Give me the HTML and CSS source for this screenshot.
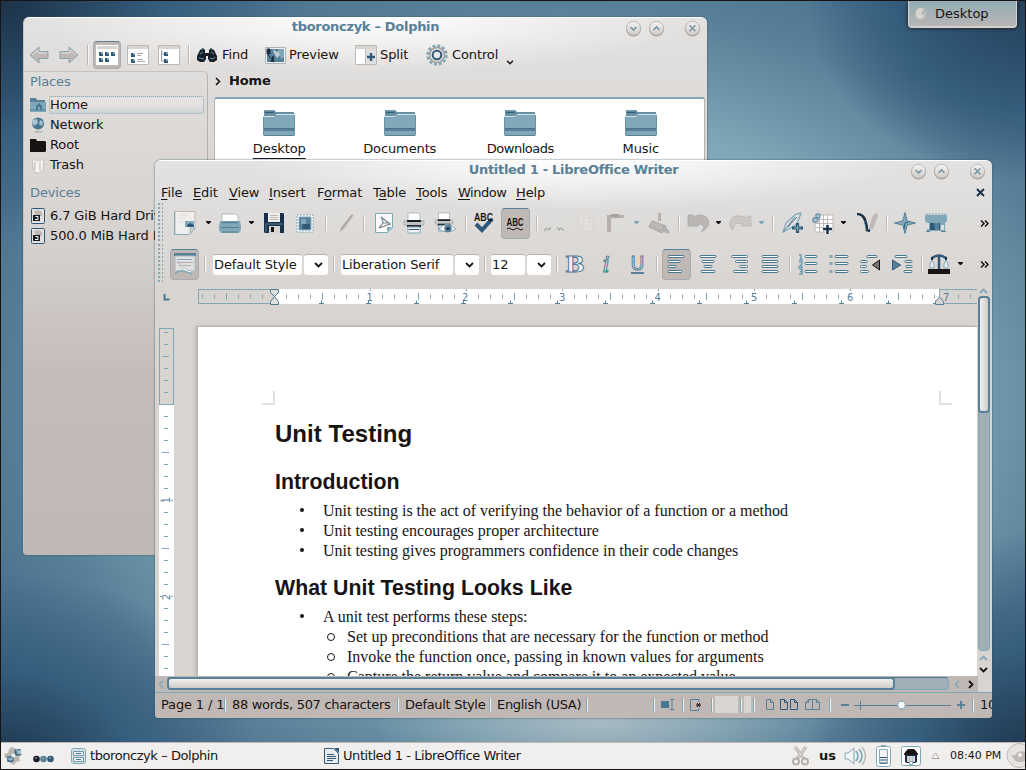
FILE: index.html
```html
<!DOCTYPE html>
<html lang="en">
<head>
<meta charset="utf-8">
<title>Desktop</title>
<link rel="stylesheet" href="styles.css">
</head>
<body>
<svg class="defs" width="0" height="0">
  <defs>
    <linearGradient id="gBtn" x1="0" y1="0" x2="0" y2="1"><stop offset="0" stop-color="#f4f3f2"/><stop offset="1" stop-color="#d0ccc8"/></linearGradient>
    <symbol id="wmin" viewBox="0 0 17 17"><circle cx="8.5" cy="9" r="7.5" fill="#a9a5a2"/><circle cx="8.5" cy="8.2" r="7" fill="url(#gBtn)" stroke="#b4afab" stroke-width=".8"/><path d="M5.5 7l3 3 3-3" fill="none" stroke="#7796a4" stroke-width="1.6"/></symbol>
    <symbol id="wmax" viewBox="0 0 17 17"><circle cx="8.5" cy="9" r="7.5" fill="#a9a5a2"/><circle cx="8.5" cy="8.2" r="7" fill="url(#gBtn)" stroke="#b4afab" stroke-width=".8"/><path d="M5.5 10l3-3 3 3" fill="none" stroke="#7796a4" stroke-width="1.6"/></symbol>
    <symbol id="wclose" viewBox="0 0 17 17"><circle cx="8.5" cy="9" r="7.5" fill="#a9a5a2"/><circle cx="8.5" cy="8.2" r="7" fill="url(#gBtn)" stroke="#b4afab" stroke-width=".8"/><path d="M5.5 5.2l6 6m0-6l-6 6" fill="none" stroke="#7796a4" stroke-width="1.5"/></symbol>
    <symbol id="folder" viewBox="0 0 32 28"><path d="M1 1h10l2 2h18v5H1z" fill="#6690a4"/><path d="M2 2h8l1 2H2zM12 5h19v2H12z" fill="#305878"/><path d="M2 2h8" stroke="#93b5c3"/><path d="M0 8h11l2-2h19v20l-1 1H1l-1-1z" fill="#80a8b8"/><path d="M0 7.500h11l2-2h19" fill="none" stroke="#d8e3e7"/><path d="M0 19.500h32" stroke="#4a758f"/><path d="M0 20h32v2H0z" fill="#588098"/><path d="M1 26.500h30" stroke="#588098"/><path d="M.5 8v18M31.500 7v19" stroke="#6891a5"/></symbol>
    <symbol id="down" viewBox="0 0 5 4"><path d="M0 0h5v1L3 3H2L0 1z" fill="currentColor"/></symbol>
    <symbol id="chev" viewBox="0 0 9 6"><path d="M1 1l3.500 3.500L8 1" fill="none" stroke="currentColor" stroke-width="1.800"/></symbol>
    <symbol id="more" viewBox="0 0 9 7"><path d="M1 .5l3 3-3 3M5 .5l3 3-3 3" fill="none" stroke="#181414" stroke-width="1.500"/></symbol>
    <symbol id="drive" viewBox="0 0 14 16"><rect x=".5" y=".5" width="13" height="15" rx="1" fill="#e0e0e0" stroke="#305878"/><path d="M3 3l4-1 4 2v4H5z" fill="#c0b8b4"/><rect x="2" y="7" width="7" height="6" fill="#181c24"/><path d="M4.500 8.500H7v3H4" fill="none" stroke="#fff"/></symbol>
    <symbol id="printer" viewBox="0 0 22 22"><path d="M5 1h12v8H5z" fill="#fff" stroke="#b4b8ba"/><path d="M4 8h14v2H4z" fill="#181c24"/><path d="M1 9h3v2h14V9h3v4H1z" fill="#d8d4d0" stroke="#8a9ca5" stroke-width=".7"/><path d="M4 13h14v2H4z" fill="#28303c"/><path d="M5 15h12v6H5z" fill="#f4f4f4" stroke="#80a8b8"/><path d="M6 17.500h10" stroke="#305878"/></symbol>
  </defs>
</svg>

<div class="desktop">
  <div class="toolbox">
    <svg width="16" height="16" viewBox="0 0 16 16"><circle cx="8" cy="8" r="6.500" fill="#c0b8b4" opacity=".7"/><path d="M3 7a5 5 0 0 1 8-4l-2 2 3 3-2 4-4 1-3-3z" fill="#d8d4d0"/><path d="M8 6l3 1-1 2z" fill="#80a8b8"/></svg>
    <span>Desktop</span>
  </div>

  <section class="window dolphin">
    <header class="titlebar"><h1>tboronczyk – Dolphin</h1>
      <div class="controls"><svg><use href="#wmin"/></svg><svg><use href="#wmax"/></svg><svg class="last"><use href="#wclose"/></svg></div>
    </header>
    <div class="d-tools">
      <svg width="20" height="18" viewBox="0 0 20 18"><path d="M1 9l9-8v4.500h9v7h-9V17z" fill="#c0b8b4" stroke="#86a3b0"/><path d="M3 9l6-5v3h9" fill="none" stroke="#e0e0e0"/></svg>
      <svg width="20" height="18" viewBox="0 0 20 18"><path d="M19 9l-9-8v4.500H1v7h9V17z" fill="#c0b8b4" stroke="#86a3b0"/><path d="M2 7h9V4l6 5" fill="none" stroke="#e0e0e0"/></svg>
      <i class="sep"></i>
      <span class="pressed"><svg width="22" height="20" viewBox="0 0 22 20"><path d="M0 0h22v20H0z" fill="#fff"/><path d="M1 1h20v3H1z" fill="#d8d4d0"/><g fill="#305878"><path d="M3 7h4v4H3zM9 7h4v4H9zM15 7h4v4h-4zM3 13h4v4H3zM9 13h4v4H9z"/></g><g fill="#80a8b8"><path d="M5 7h2v2H5zM11 7h2v2h-2zM17 7h2v2h-2zM5 13h2v2H5zM11 13h2v2h-2z"/></g></svg></span>
      <svg width="22" height="20" viewBox="0 0 22 20"><path d="M.5.5h21v19H.5z" fill="#fff" stroke="#c0b8b4"/><path d="M1 1h20v3H1z" fill="#d8d4d0"/><path d="M4 8h4v4H4zM4 14h4v4H4z" fill="#305878"/><path d="M6 8h2v2H6zM6 14h2v2H6z" fill="#80a8b8"/><path d="M10 8.500h6M10 10.500h4M10 14.500h6M10 16.500h8" stroke="#aaa8a6"/></svg>
      <svg width="22" height="20" viewBox="0 0 22 20"><path d="M.5.500h21v19H.5z" fill="#fff" stroke="#c0b8b4"/><path d="M1 1h20v3H1z" fill="#d8d4d0"/><path d="M3.500 5v11H6M3.500 9H6" fill="none" stroke="#8a9ca5"/><path d="M6 7h4v4H6zM6 14h4v4H6z" fill="#305878"/><path d="M8 7h2v2H8zM8 14h2v2H8z" fill="#80a8b8"/></svg>
      <i class="sep"></i>
      <svg width="22" height="16" viewBox="0 0 22 16"><path d="M4 3l3-2 2 2v3h4V3l2-2 3 2 3 6v4l-3 2h-4l-2-3V9h-2v3l-2 3H4l-3-2V9z" fill="#181c24"/><path d="M3 10a3 2.500 0 0 0 5 1M14 11a3 2.500 0 0 0 5-1M4 7l3-2M15 5l3 2M5 3l2-1M15 2l2 1" stroke="#487890" stroke-width="1.300" fill="none"/></svg><b>Find</b>
      <svg width="21" height="17" viewBox="0 0 21 17"><path d="M.5.500h20v16H.5z" fill="#f0f0f0" stroke="#aab4b8"/><path d="M2 2h17v13H2z" fill="#588098"/><path d="M8 2l4 3 2-1 2 3-4 4-3-5z" fill="#c0ccd0"/><path d="M13 2h6v8l-3 2z" fill="#80a8b8"/><path d="M2 2h3v5H2zM6 15l2-6 1 6M3 8l4 4" stroke="#183048" fill="#183048"/></svg><b>Preview</b>
      <svg width="22" height="20" viewBox="0 0 22 20"><path d="M.5.500h21v19H.5z" fill="#fff" stroke="#c0b8b4"/><path d="M1 1h20v3H1z" fill="#d8d4d0"/><path d="M10 4h11v15H10z" fill="#e0e0e0"/><path d="M10.500 4v15" stroke="#c0b8b4"/><path d="M12 12h8M16 8v8" stroke="#305878" stroke-width="2.400"/></svg><b>Split</b>
      <svg width="22" height="22" viewBox="0 0 22 22"><circle cx="11" cy="11" r="9.300" fill="none" stroke="#80a8b8" stroke-width="2.800" stroke-dasharray="3 1.870"/><circle cx="11" cy="11" r="7.500" fill="#e0e0e0" stroke="#a09e9c" stroke-width="1.500"/><circle cx="11" cy="11" r="4.300" fill="#e8eaea" stroke="#305878" stroke-width="2"/></svg><b>Control</b>
      <svg class="ctl" width="8" height="5"><use href="#chev"/></svg>
    </div>
    <div class="d-body">
      <aside class="places">
        <h2>Places</h2>
        <ul>
          <li class="sel"><svg viewBox="0 0 16 16"><path d="M0 1h6l1 2h8v12H0z" fill="#588098"/><path d="M0 5h16v10H0z" fill="#80a8b8"/><path d="M0 13h16" stroke="#588098"/><path d="M6 13V9l3-3 3 3v4H10v-3H8v3z" fill="#487890"/></svg><span>Home</span></li>
          <li><svg viewBox="0 0 16 16"><circle cx="8" cy="6.500" r="6" fill="#487890"/><path d="M3 3l4-1 1 4-4 3-2-3zM10 3l3 2-1 4-3-2z" fill="#a9c4cf"/><path d="M4 15h9M8 13v2" stroke="#b4b8ba" stroke-width="1.500"/></svg><span>Network</span></li>
          <li><svg viewBox="0 0 16 16"><path d="M0 2h6l1 2h8l1 1v9l-1 1H0z" fill="#181414"/></svg><span>Root</span></li>
          <li><svg viewBox="0 0 16 16"><path d="M2 2h12l-1 12-4 2-5-1z" fill="#f4f4f4" stroke="#b4afab" stroke-width=".7"/><ellipse cx="8" cy="2.500" rx="6" ry="1.700" fill="#d8d4d0"/><path d="M10 5v9M5 5v8" stroke="#c0b8b4"/></svg><span>Trash</span></li>
        </ul>
        <h2>Devices</h2>
        <ul>
          <li><svg viewBox="0 0 14 16"><use href="#drive"/></svg><span>6.7 GiB Hard Drive</span></li>
          <li><svg viewBox="0 0 14 16"><use href="#drive"/></svg><span>500.0 MiB Hard Drive</span></li>
        </ul>
      </aside>
      <div class="view">
        <nav class="crumb"><svg width="6" height="9" viewBox="0 0 6 9"><path d="M1 1l3.500 3.500L1 8" fill="none" stroke="#181414" stroke-width="1.600"/></svg><strong>Home</strong></nav>
        <div class="files">
          <figure><svg><use href="#folder"/></svg><figcaption class="under">Desktop</figcaption></figure>
          <figure><svg><use href="#folder"/></svg><figcaption>Documents</figcaption></figure>
          <figure><svg><use href="#folder"/></svg><figcaption class="tight">Downloads</figcaption></figure>
          <figure><svg><use href="#folder"/></svg><figcaption>Music</figcaption></figure>
        </div>
      </div>
    </div>
  </section>

  <section class="window writer">
    <header class="titlebar"><h1>Untitled 1 - LibreOffice Writer</h1>
      <div class="controls"><svg><use href="#wmin"/></svg><svg><use href="#wmax"/></svg><svg class="last"><use href="#wclose"/></svg></div>
    </header>
    <nav class="menu">
      <span><u>F</u>ile</span><span><u>E</u>dit</span><span><u>V</u>iew</span><span><u>I</u>nsert</span><span>F<u>o</u>rmat</span><span>T<u>a</u>ble</span><span><u>T</u>ools</span><span class="tight"><u>W</u>indow</span><span><u>H</u>elp</span>
      <svg width="9" height="9" viewBox="0 0 9 9"><path d="M1 1l7 7M8 1L1 8" stroke="#183048" stroke-width="1.900"/></svg>
    </nav>

    <div class="bar bar1">
      <i class="grip"></i>
      <svg width="22" height="24" viewBox="0 0 22 24"><path d="M1 .5h20v17l-5 6H1z" fill="#f0efee" stroke="#c0b8b4"/><path d="M.5 1v22.500H15" fill="none" stroke="#80a8b8"/><path d="M21 17h-5v6z" fill="#c8d4d8" stroke="#aab4b8"/><path d="M11 10h9v6h-9z" fill="#80a8b8"/><path d="M13 14l3-2 4 2v2h-7z" fill="#305878"/><path d="M4 4h10M4 7h8M4 11h4" stroke="#e0ddda"/></svg>
      <svg class="arr"><use href="#down"/></svg>
      <svg width="22" height="20" viewBox="0 0 22 20"><path d="M3 9V1h14l2 2v6z" fill="#fff" stroke="#b4b8ba"/><path d="M1 8h20l1 5H0z" fill="#80a8b8"/><path d="M3 9.500h16" stroke="#588098" stroke-width="1.500"/><path d="M0 13h22v4l-2 3H2l-2-3z" fill="#80a8b8"/><path d="M2 14.500h18M3 19h16" stroke="#588098"/></svg>
      <svg class="arr"><use href="#down"/></svg>
      <svg width="20" height="20" viewBox="0 0 20 20"><path d="M0 0h19l1 1v19H1l-1-1z" fill="#183048"/><path d="M4 0h12v9H4z" fill="#f0efee"/><path d="M6 2.500h8M6 4.500h8M6 6.500h8" stroke="#c0b8b4"/><path d="M1 11h18M2 12v7" stroke="#588098"/><path d="M5 13h11v7H5z" fill="#d8d4d0"/><path d="M7 14h3v5H7z" fill="#181414"/></svg>
      <svg width="18" height="19" viewBox="0 0 18 19"><path d="M1 1h16v17H1z" fill="#fff" stroke="#80a8b8" stroke-dasharray="2 1"/><path d="M3 3h12v13H3z" fill="#588098" stroke="#80a8b8"/><path d="M5 5h5v5H5z" fill="#80a8b8"/><path d="M7 10h7v5H6z" fill="#305878"/></svg>
      <i class="sep"></i>
      <svg width="18" height="20" viewBox="0 0 18 20"><path d="M15 1l2 1L7 16l-4 3 1-5z" fill="#c0b8b4"/><path d="M15 2L4 17" stroke="#a09a97"/></svg>
      <i class="sep"></i>
      <svg width="18" height="20" viewBox="0 0 18 20"><path d="M.5.500h17v14l-5 5H.5z" fill="#fbfbfb" stroke="#80a8b8"/><path d="M17 14h-5v5z" fill="#80a8b8"/><path d="M6 4q2 3 2 6l7 0M8 10l-4 5M6 4l9 7-11 4" fill="none" stroke="#77828a" stroke-width="1.200"/></svg>
      <svg width="22" height="22"><use href="#printer"/></svg>
      <svg width="23" height="22" viewBox="0 0 23 22"><use href="#printer" width="20" height="20"/><path d="M5 17q8-9 17 0-9 6-17 0z" fill="#fff" stroke="#80a8b8"/><circle cx="14" cy="16.500" r="3.800" fill="#588098"/><circle cx="14" cy="16.500" r="1.600" fill="#183048"/></svg>
      <i class="sep"></i>
      <svg class="abc" width="22" height="22" viewBox="0 0 22 22"><path d="M3 12l6 6 10-11" fill="none" stroke="#305878" stroke-width="4"/><text x="1" y="9" textLength="19" lengthAdjust="spacingAndGlyphs">ABC</text></svg>
      <span class="pressed"><svg class="abc" width="22" height="22" viewBox="0 0 22 22"><text x="2.500" y="14" textLength="17" lengthAdjust="spacingAndGlyphs">ABC</text><path d="M3 17q2-2 4 0t4 0 4 0 4 0" fill="none" stroke="#181414"/></svg></span>
      <i class="sep"></i>
      <svg width="20" height="20" viewBox="0 0 20 20"><path d="M6 9l5 6M14 9l-5 6" stroke="#e0e0e0"/><path d="M1 18a2 2 0 0 1 4-1l2-3M19 18a2 2 0 0 0-4-1l-2-3" fill="none" stroke="#a9aaaa" stroke-width="1.300"/></svg>
      <svg width="18" height="20" viewBox="0 0 18 20"><path d="M2 1h11v13H2zM6 5h10v13H6z" fill="#e2e1e0" stroke="#d2cecb" stroke-dasharray="2 1"/></svg>
      <svg width="18" height="20" viewBox="0 0 18 20"><path d="M0 2h17v3H4v14H0z" fill="#b8b0ac"/><path d="M4 1h8v3H4z" fill="#a9a29e"/><path d="M5 6h12v12H5z" fill="#dfdddb"/></svg>
      <svg class="arr pale"><use href="#down"/></svg>
      <svg width="23" height="23" viewBox="0 0 23 23"><path d="M10 1h3v8h-3z" fill="#b8b0ac"/><path d="M4 9l14 5-4 7-13-6z" fill="#c0b8b4" stroke="#aca5a1"/><path d="M15 13l7 7-2 2-6-3z" fill="#b8b0ac"/><path d="M2 13l12 6 2-6 5 7" fill="none" stroke="#80a8b8" stroke-dasharray="1 1"/></svg>
      <i class="sep"></i>
      <svg width="23" height="18" viewBox="0 0 23 18"><path d="M1 1h5l-1 2Q19-3 22 8q0 6-8 10 3-3 3-5-2-3-5-3l-1 2H1z" fill="#bdb5b1" stroke="#9eabb0" stroke-width=".8"/></svg>
      <svg class="arr"><use href="#down"/></svg>
      <svg width="23" height="18" viewBox="0 0 23 18"><path d="M22 12H12l1-2q-6-2-8 2l-1 4Q0 13 1 8 5-2 18 4l1-2h3z" fill="#ccc7c3" stroke="#b4afab" stroke-dasharray="2 1"/></svg>
      <svg class="arr pale"><use href="#down"/></svg>
      <i class="sep"></i>
      <svg width="22" height="22" viewBox="0 0 22 22"><path d="M1 20L4 11 14 2l5-1-4 11-8 5z" fill="#e0e0e0" stroke="#80a8b8" stroke-width="1.300"/><path d="M2 19L13 5M6 15l9-10" stroke="#588098"/><path d="M10 16h11M15.500 11v10" stroke="#305878" stroke-width="3.200"/><path d="M12 16h7M15.500 13v6" stroke="#80a8b8"/></svg>
      <svg width="21" height="21" viewBox="0 0 21 21"><path d="M3 2h18v17H3z" fill="#fff"/><path d="M3 6.500h18M3 10.500h18M3 14.500h18M7.500 2v17M11.500 2v17M15.500 2v17M3 2h18v17H3z" fill="none" stroke="#c0b8b4"/><path d="M4 1h4v4H4zM1 5h5v4H1z" fill="#a9c4cf" stroke="#588098"/><path d="M11 16h9M15.500 12v9" stroke="#fff" stroke-width="4"/><path d="M11 16h9M15.500 12v9" stroke="#183048" stroke-width="2.500"/></svg>
      <svg class="arr"><use href="#down"/></svg>
      <svg width="24" height="22" viewBox="0 0 24 22"><path d="M14 17l3-12q3-4 5-4l1 3-5 13z" fill="#c0b8b4"/><path d="M2 2q6 0 8 6t2 10l3 1" fill="none" stroke="#183048" stroke-width="2.600"/><path d="M10 9q0 8 3 10" fill="none" stroke="#80a8b8" stroke-dasharray="1 1.500"/></svg>
      <i class="sep"></i>
      <svg width="22" height="22" viewBox="0 0 22 22"><path d="M11 .5l2.200 8.300 8.300 2.200-8.300 2.200L11 21.500l-2.200-8.300L.5 11l8.300-2.200z" fill="#80a8b8" stroke="#588098"/><path d="M11 11l3-1M11 11l-1 6" stroke="#305878"/></svg>
      <svg width="22" height="20" viewBox="0 0 22 20"><path d="M0 2h22v6l-2 2v8H2v-8L0 8z" fill="#80a8b8"/><path d="M1 1h20" stroke="#80a8b8" stroke-dasharray="2 1"/><path d="M5 10h10v7H5z" fill="#305878"/><path d="M9 10h5v7h-4z" fill="#588098"/><path d="M2 10h2v6H2zM16 12h3v5h-3z" fill="#d8e0e3"/><path d="M1 18.500h4M16 18.500h5" stroke="#588098"/></svg>
      <i></i>
      <svg width="9" height="7"><use href="#more"/></svg>
    </div>

    <div class="bar bar2">
      <i class="grip"></i>
      <span class="pressed"><svg width="22" height="22" viewBox="0 0 22 22"><path d="M0 0h22v3H0z" fill="#588098"/><path d="M1 3h20v15H1z" fill="#e0e0e0" stroke="#a9b9c0"/><path d="M3 6.500h15" stroke="#80a8b8"/><path d="M3 9.500h16M5 12.500h12" stroke="#b4afab"/><path d="M3 8l10 9 5 1-3 3-4-3z" fill="#fff" stroke="#aab4b8" stroke-width=".8"/><path d="M1 21q4-6 17 0" stroke="#80a8b8" stroke-width="1.500" fill="none"/></svg></span>
      <i class="sep"></i>
      <span class="combo"><em>Default Style</em><i><svg width="9" height="6"><use href="#chev"/></svg></i></span>
      <i class="sep"></i>
      <span class="combo"><em>Liberation Serif</em><i><svg width="9" height="6"><use href="#chev"/></svg></i></span>
      <i class="sep"></i>
      <span class="combo"><em>12</em><i><svg width="9" height="6"><use href="#chev"/></svg></i></span>
      <i class="sep"></i>
      <span class="fmt bold">B</span>
      <span class="fmt ital">i</span>
      <span class="fmt undl">U</span>
      <i class="sep"></i>
      <span class="pressed"><svg class="lines" viewBox="0 0 20 20"><rect x="1" y="1.500" width="16" height="2" rx="1"/><rect x="1" y="6.500" width="12" height="2" rx="1"/><rect x="1" y="11.500" width="8" height="2" rx="1"/><rect x="1" y="16.500" width="14" height="2" rx="1"/></svg></span>
      <svg class="lines" viewBox="0 0 20 20"><rect x="2" y="1.500" width="16" height="2" rx="1"/><rect x="4" y="6.500" width="12" height="2" rx="1"/><rect x="6" y="11.500" width="8" height="2" rx="1"/><rect x="3" y="16.500" width="14" height="2" rx="1"/></svg>
      <svg class="lines" viewBox="0 0 20 20"><rect x="2.500" y="1.500" width="16" height="2" rx="1"/><rect x="6.500" y="6.500" width="12" height="2" rx="1"/><rect x="10.500" y="11.500" width="8" height="2" rx="1"/><rect x="4.500" y="16.500" width="14" height="2" rx="1"/></svg>
      <svg class="lines" viewBox="0 0 20 20"><rect x="2" y="1.500" width="16" height="2" rx="1"/><rect x="2" y="6.500" width="16" height="2" rx="1"/><rect x="2" y="11.500" width="16" height="2" rx="1"/><rect x="2" y="16.500" width="16" height="2" rx="1"/></svg>
      <i class="sep"></i>
      <svg class="lines" viewBox="0 0 20 20"><g class="nums"><path d="M1 1h2v5M1 6h4M1 8h3v2L1 13h4M1 15h3v5H1M2 17.500h2"/></g><rect x="7" y="1.500" width="12" height="2" rx="1"/><rect x="7" y="8.500" width="12" height="2" rx="1"/><rect x="7" y="16.500" width="12" height="2" rx="1"/></svg>
      <svg class="lines" viewBox="0 0 20 20"><g class="dots"><rect x="1" y="1.500" width="2" height="2"/><rect x="1" y="8.500" width="2" height="2"/><rect x="1" y="16.500" width="2" height="2"/></g><rect x="6" y="1.500" width="13" height="2" rx="1"/><rect x="6" y="8.500" width="13" height="2" rx="1"/><rect x="6" y="16.500" width="13" height="2" rx="1"/></svg>
      <svg class="lines" viewBox="0 0 20 20"><rect x="7" y="1.500" width="10" height="2" rx="1"/><rect x=".5" y="6.500" width="7" height="2" rx="1"/><rect x=".5" y="11.500" width="6" height="2" rx="1"/><rect x=".5" y="16.500" width="8" height="2" rx="1"/><path d="M19.500 6v10l-7-5z" fill="#77706e" stroke="#181414"/></svg>
      <svg class="lines" viewBox="0 0 20 20"><rect x="3" y="1.500" width="12" height="2" rx="1"/><rect x="13" y="6.500" width="7" height="2" rx="1"/><rect x="14" y="11.500" width="6" height="2" rx="1"/><rect x="12" y="16.500" width="8" height="2" rx="1"/><path d="M.5 6v10l8-5z" fill="#588098" stroke="#305878"/></svg>
      <i class="sep"></i>
      <svg width="22" height="20" viewBox="0 0 22 20"><path d="M0 15h22v5H0z" fill="#181414"/><path d="M4 4q7-5 14 0" fill="none" stroke="#305878" stroke-width="2.500"/><path d="M11 2v13" stroke="#305878" stroke-width="2.500"/><path d="M4 3v3M18 3v3" stroke="#183048" stroke-width="2"/><path d="M4 6l-2 4v4h4v-4zM18 6l-2 4v4h4v-4z" fill="#e8ecee" stroke="#80a8b8"/></svg>
      <svg class="arr"><use href="#down"/></svg>
      <i></i>
      <svg width="9" height="7"><use href="#more"/></svg>
    </div>

    <div class="work">
      <div class="workmain">
        <svg class="hruler" width="822" height="38" viewBox="155 289 822 38">
          <path d="M164.500 294v5.500h5" fill="none" stroke="#487890" stroke-width="2"/>
          <rect x="198.500" y="289.500" width="780" height="14" fill="none" stroke="#80a8b8"/>
          <rect x="274" y="289" width="665" height="15" fill="#fff"/>
          <path d="M202 296.500h774" stroke="#80a8b8" stroke-width="4" stroke-dasharray="1 11"/>
          <path d="M226.500 293v7M322.500 293v7M418.500 293v7M514.500 293v7M610.500 293v7M706.500 293v7M802.500 293v7M898.500 293v7" stroke="#80a8b8"/>
          <path d="M365 292h9v10h-9zM461 292h9v10h-9zM557 292h9v10h-9zM653 292h9v10h-9zM749 292h9v10h-9zM845 292h9v10h-9z" fill="#fff"/>
          <path d="M941 292h10v10h-10zM268 292h12v10h-12z" fill="#d8d4d0"/>
          <path d="M274 289h6v15h-6z" fill="#fff"/>
          <g class="rnum" text-anchor="middle"><text x="369.500" y="300.500">1</text><text x="465" y="300.500">2</text><text x="562" y="300.500">3</text><text x="657.500" y="300.500">4</text><text x="754" y="300.500">5</text><text x="850" y="300.500">6</text><text x="946" y="300.500">7</text></g>
          <path d="M370.500 289v2M466.500 289v2M562.500 289v2M658.500 289v2M754.500 289v2M850.500 289v2M946.500 289v2" stroke="#80a8b8"/>
          <path d="M319 303.500h5m-2.500 0v-3M366 303.500h5m-2.500 0v-3M414 303.500h5m-2.500 0v-3M461 303.500h5m-2.500 0v-3M508 303.500h5m-2.500 0v-3M555 303.500h5m-2.500 0v-3M603 303.500h5m-2.500 0v-3M650 303.500h5m-2.500 0v-3M697 303.500h5m-2.500 0v-3M744 303.500h5m-2.500 0v-3M792 303.500h5m-2.500 0v-3M839 303.500h5m-2.500 0v-3M886 303.500h5m-2.500 0v-3M933 303.500h5m-2.500 0v-3" stroke="#588098"/>
          <path d="M270.500 289.500h8v3l-4 4-4-4zM270.500 304.500h8v-3l-4-5-4 5z" fill="#e0e0e0" stroke="#487890"/>
          <path d="M935.500 304.500h8v-3l-4-4.500-4 4.500z" fill="#d8d4d0" stroke="#588098"/>
          <path d="M939.500 290v7" stroke="#80a8b8"/>
        </svg>
        <div class="docrow">
          <svg class="vruler" width="42" height="349" viewBox="155 327 42 349">
            <rect x="159" y="405" width="15" height="271" fill="#fff"/>
            <rect x="159.500" y="328.500" width="14" height="76" fill="none" stroke="#80a8b8"/>
            <path d="M166 332v344" stroke="#80a8b8" stroke-width="4" stroke-dasharray="1 11"/>
            <path d="M162 356.500h7M162 452.500h7M162 548.500h7M162 644.500h7" stroke="#80a8b8"/>
            <path d="M160 495h13v10h-13zM160 591h13v10h-13z" fill="#fff"/>
            <path d="M161 404.500h11" stroke="#80a8b8"/>
            <g class="rnum" text-anchor="middle"><text transform="translate(170 500) rotate(-90)">1</text><text transform="translate(170 597) rotate(-90)">2</text></g>
            <path d="M160 500.500h2M171 500.500h2M160 596.500h2M171 596.500h2" stroke="#80a8b8"/>
          </svg>
          <article class="page">
            <div class="corners"><i></i><i></i></div>
            <h2 class="t1">Unit Testing</h2>
            <h2 class="t2">Introduction</h2>
            <ul>
              <li>Unit testing is the act of verifying the behavior of a function or a method</li>
              <li>Unit testing encourages proper architecture</li>
              <li>Unit testing gives programmers confidence in their code changes</li>
            </ul>
            <h2 class="t3">What Unit Testing Looks Like</h2>
            <ul>
              <li>A unit test performs these steps:
                <ul>
                  <li>Set up preconditions that are necessary for the function or method</li>
                  <li>Invoke the function once, passing in known values for arguments</li>
                  <li>Capture the return value and compare it to an expected value</li>
                </ul>
              </li>
            </ul>
          </article>
        </div>
      </div>
      <div class="vscroll">
        <svg width="9" height="6" class="up soft"><use href="#chev"/></svg>
        <div class="vtrack"><div class="vthumb"></div></div>
        <svg width="9" height="6" class="up soft"><use href="#chev"/></svg>
        <svg width="9" height="6"><use href="#chev"/></svg>
      </div>
    </div>
    <div class="hscroll">
      <svg width="6" height="9" viewBox="0 0 6 9"><path d="M5 1L1.500 4.500 5 8" fill="none" stroke="#80a8b8" stroke-width="1.500"/></svg>
      <div class="htrack"><div class="hthumb"></div></div>
      <svg width="6" height="9" viewBox="0 0 6 9"><path d="M5 1L1.500 4.500 5 8" fill="none" stroke="#80a8b8" stroke-width="1.500"/></svg>
      <svg width="6" height="9" viewBox="0 0 6 9"><path d="M1 1l3.500 3.500L1 8" fill="none" stroke="#181414" stroke-width="1.800"/></svg>
      <i></i>
    </div>
    <footer class="status">
      <span>Page 1 / 1</span><span>88 words, 507 characters</span><span>Default Style</span><span>English (USA)</span>
      <span></span>
      <span><svg width="13" height="11" viewBox="0 0 13 11"><path d="M0 2h8v7H0z" fill="#487890"/><path d="M9 .5h4M9 10.500h4M11 1v9" stroke="#588098"/></svg></span>
      <span><svg width="12" height="12" viewBox="0 0 12 12"><path d="M9 .5H.5v11H9M9 9v2M9 0v3" fill="none" stroke="#588098"/><path d="M6 6h5M7 4l3 4M10 4L7 8" stroke="#181414"/></svg></span>
      <span><b></b></span><span><b></b></span>
      <span><svg width="55" height="11" viewBox="0 0 55 11" fill="none" stroke="#588098"><path d="M.5.500h4l3 3v7h-7zM4.500.500v3h3"/><g stroke="#305878"><path d="M14.500.500h4l3 3v7h-7zM18.500.500v3h3M24.500.500h4l3 3v7h-7zM28.500.500v3h3"/></g><path d="M46.500 10.500v-10h-4l-3 3v7zM46.500.500h4l3 3v7h-7M42.500.500v3h-3M50.500.500v3h3"/></svg></span>
      <span><svg width="124" height="12" viewBox="0 0 124 12"><path d="M1 6h8M117 6h8M121 2v8" stroke="#588098" stroke-width="2"/><path d="M14 6.500h97M20.500 2v9" stroke="#588098"/><path d="M61.500 1v10" stroke="#80a8b8"/><circle cx="61.500" cy="6" r="3.800" fill="#fff" stroke="#80a8b8"/></svg></span>
      <span>100%</span>
    </footer>
  </section>

  <footer class="taskbar">
    <svg width="20" height="20" viewBox="0 0 20 20"><path d="M7 1l4 1 2 3 3-1 2 5-3 2 1 4-4 1-2 3-4-2-1-4-4-1-1-4 4-1 1-4z" fill="#bdb5b1"/><path d="M11 3h6v6h-6zM3 10h6v6H3z" fill="#588098"/><path d="M12 3l3 2 2-2v5h-3zM3 11l3 2 3-2v4H6z" fill="#a9c4cf"/><path d="M11 4v5h5M4 15h5v-4" fill="none" stroke="#305878"/><circle cx="9.500" cy="9.500" r="2" fill="#f0efee"/></svg>
    <svg class="dotsic" width="21" height="8" viewBox="0 0 21 8"><circle cx="3.500" cy="4" r="3.300" fill="#181c24"/><circle cx="10.500" cy="4" r="3.300" fill="#588098"/><circle cx="17.500" cy="4" r="3.300" fill="#305878"/><path d="M2 3h2M9 3h2M16 3h2" stroke="#a9c4cf"/></svg>
    <svg width="15" height="16" viewBox="0 0 15 16"><rect x=".5" y=".5" width="14" height="15" rx="2" fill="#d8e0e3" stroke="#80a8b8"/><path d="M2.500 3.500h10v4h-10zM2.500 9.500h10v4h-10z" fill="#f4f4f4" stroke="#6f98ab"/><path d="M5 5.500h5M5 11.500h5" stroke="#487890"/></svg>
    <span>tboronczyk – Dolphin</span>
    <svg width="15" height="16" viewBox="0 0 15 16"><path d="M.5.500h9l5 5v10H.5z" fill="#e8ecee" stroke="#305878"/><path d="M10 0h5v5z" fill="#305878"/><path d="M3 6.500h7M3 8.500h9M3 10.500h9M3 12.500h6" stroke="#305878"/></svg>
    <span>Untitled 1 - LibreOffice Writer</span>
    <svg width="17" height="20" viewBox="0 0 17 20"><path d="M3 1l9 12M14 1L5 13" stroke="#b4afab" stroke-width="3"/><path d="M3 1l9 12M14 1L5 13" stroke="#eeeceb"/><circle cx="4" cy="15.500" r="3" fill="none" stroke="#b4afab" stroke-width="2"/><circle cx="13" cy="15.500" r="3" fill="none" stroke="#b4afab" stroke-width="2"/></svg>
    <strong>us</strong>
    <svg width="23" height="20" viewBox="0 0 23 20"><path d="M1 7h3l6-5v16l-6-5H1z" fill="#f4f4f4" stroke="#80a8b8"/><path d="M12 5q4 5 0 10M15 3q6 7 0 14" fill="none" stroke="#80a8b8" stroke-width="1.700"/><path d="M18 1q7 9 0 18" fill="none" stroke="#c0b8b4" stroke-width="1.500"/></svg>
    <svg width="15" height="22" viewBox="0 0 15 22"><rect x=".5" y="1.500" width="14" height="20" rx="2" fill="#fff" stroke="#80a8b8"/><path d="M5 1h5" stroke="#80a8b8" stroke-width="2"/><path d="M3.500 4.500h8v14h-8z" fill="#f4f4f4" stroke="#80a8b8"/><path d="M4 12.500h7M4 15h7M4 18h7" stroke="#305878"/></svg>
    <svg width="20" height="20" viewBox="0 0 20 20"><rect x=".5" y=".5" width="19" height="19" rx="2" fill="#fff" stroke="#80a8b8"/><path d="M3 8l2-3 2-2h6l2 2 2 3v1H3z" fill="#181414"/><path d="M4 9h12v7l-2 1H6l-2-1z" fill="#183048"/><path d="M6 10h8v6H6z" fill="#d8d4d0"/><path d="M8.500 10v5M11.500 10v5" stroke="#a9c4cf"/><path d="M8.500 15.500h3v3h-3z" fill="#fff" stroke="#80a8b8"/></svg>
    <svg width="9" height="8" viewBox="0 0 9 8"><path d="M4.500 1l3.500 5.500H1z" fill="#f8f8f8" stroke="#aaa5a2"/></svg>
    <time>08:40 PM</time>
    <svg class="cashew" width="20" height="25" viewBox="0 0 20 25"><circle cx="14" cy="12.500" r="12" fill="#e6e4e3" stroke="#c0b8b4"/><path d="M6 11q3 3 5 0t6-3l3 1v9q-10 4-14-7z" fill="#c0b8b4"/><circle cx="15" cy="12" r="2" fill="#f0f0f0"/></svg>
  </footer>
</div>
</body>
</html>
```
FILE: styles.css
```css
* { box-sizing: border-box; }
html, body { margin: 0; padding: 0; }
body { font: 13px/18px "DejaVu Sans", sans-serif; letter-spacing: -.12px; color: #181414; width: 1026px; height: 770px; overflow: hidden; }
svg { display: block; flex: none; overflow: visible; }
h1, h2, ul, li, figure { margin: 0; padding: 0; list-style: none; }
i, em { font-style: normal; }
.defs { position: absolute; }
.tight { letter-spacing: -.5px; }

.desktop {
  position: relative; width: 1026px; height: 770px; overflow: hidden;
  border: 1px solid #181414;
  background:
    radial-gradient(ellipse 230px 60px at 600px 722px, rgba(190,200,204,.7), rgba(128,168,184,0)),
    radial-gradient(ellipse 300px 240px at 0 0, #1c3248 0, rgba(48,88,120,.7) 55%, rgba(48,88,120,0)),
    radial-gradient(ellipse 220px 180px at 1026px 0, #24415c 0, rgba(48,88,120,.85) 60%, rgba(48,88,120,0)),
    radial-gradient(ellipse 220px 240px at 1026px 770px, #1c3248 0, rgba(48,88,120,.85) 50%, rgba(48,88,120,0)),
    radial-gradient(ellipse 260px 200px at 0 770px, #1c3248 0, rgba(48,88,120,.8) 50%, rgba(48,88,120,0)),
    radial-gradient(ellipse 600px 450px at 560px 400px, #9dbcc8 0, #80a8b8 62%, #588098 88%, #41698a 115%);
}
.toolbox {
  position: absolute; left: 907px; top: 0; width: 109px; height: 27px;
  display: flex; align-items: center; gap: 6px; padding: 1px 0 0 4px; letter-spacing: 0;
  background: linear-gradient(#93acb6, #b7b6b6); border: solid #d8d0cc; border-width: 0 1px 2px;
  border-radius: 0 0 4px 4px; box-shadow: 0 0 4px #181414;
}

.window { position: absolute; border-radius: 6px 6px 4px 4px; overflow: hidden; box-shadow: 0 0 2px #2f4c63; }
.titlebar { position: relative; height: 21px; display: flex; justify-content: center; }
.titlebar h1 { font-size: 13px; line-height: 18px; font-weight: bold; letter-spacing: -.3px; color: #588098; white-space: nowrap; }
.controls { position: absolute; right: 6px; top: 2px; display: flex; gap: 6px; }
.controls svg { width: 17px; height: 17px; }
.controls .last { margin-left: 13px; }
.sep { display: block; width: 2px; height: 16px; background: #c0b8b4; border-right: 1px solid #f8f8f8; }
.pressed { display: flex; align-items: center; justify-content: center; width: 29px; height: 31px; background: #c0b8b4; border: 1px solid #a9acae; border-top-color: #588098; border-radius: 4px; }

/* file manager */
.dolphin { left: 22px; top: 16px; width: 684px; height: 538px;
  background: radial-gradient(ellipse 330px 55px at 50% 0, #fff 0, rgba(255,255,255,0)) no-repeat, linear-gradient(#e3e2e1 0, #dfdddb 60px, #d6d2cf 220px, #c4bcb8 360px, #c0b8b4);
  border-top: 1px solid #fff; border-left: 1px solid #c8c2be; }
.d-tools { height: 32px; display: grid; align-items: center; justify-items: center;
  grid-template-columns: 29px 31px 8px 30px 32px 30px 10px 26px 44px 22px 68px 24px 46px 26px 54px 12px; }
.d-tools > b { font-weight: normal; justify-self: start; white-space: nowrap; padding-left: 2px; }
.d-tools > b:nth-of-type(2) { padding-left: 3px; }
.d-tools .sep { height: 20px; }
.d-tools .pressed { width: 28px; height: 28px; }
.d-tools .ctl { align-self: end; margin-bottom: 6px; }
.d-body { display: flex; height: 483px; }
.places { width: 184px; border-top: 1px solid #c8c2be; border-right: 1px solid #b8b0ac; border-radius: 0 5px 0 0; padding: 0 3px 0 6px; }
.places h2 { font-weight: normal; font-size: 13px; line-height: 20px; color: #588098; margin-bottom: 3px; }
.places ul { margin-bottom: 8px; }
.places li { display: flex; align-items: center; gap: 3px; height: 20px; white-space: nowrap; }
.places li svg { width: 16px; height: 16px; }
.places li span { height: 18px; line-height: 17px; padding: 0 1px; }
.places .sel span { flex: 1; border: 1px dotted #80a8b8; padding: 0; line-height: 15px; border-radius: 2px; background: linear-gradient(#e4e3e2 50%, #ccd2d3); }
.view { flex: 1; padding: 0 2px 0 6px; }
.crumb { height: 26px; display: flex; align-items: center; gap: 8px; padding: 0 0 6px 1px; }
.files { height: 430px; background: #fff; border: 1px solid #b8b0ac; border-top: 2px solid #80a8b8; border-radius: 3px 3px 0 0; display: grid; grid-template-columns: repeat(4, 120.500px); padding-left: 4px; }
.files figure { text-align: center; padding-top: 10px; }
.files svg { width: 32px; height: 28px; margin: 0 auto 3px; }
.files figcaption { line-height: 18px; }
.files .under { text-decoration: underline; text-underline-offset: 5px; text-decoration-thickness: 1px; text-decoration-skip-ink: none; }

/* word processor */
.writer { left: 154px; top: 159px; width: 837px; height: 558px; display: flex; flex-direction: column;
  background: radial-gradient(ellipse 330px 48px at 50% 0, #fff 0, rgba(255,255,255,0)) no-repeat, linear-gradient(#e3e2e1 0, #dedcda 60px, #d8d4d0 130px);
  border-top: 1px solid #fff; }
.menu { height: 21px; flex: none; display: grid; grid-template-columns: 32px 36px 40px 48px 56px 43px 42px 58px 1fr 16px; padding-left: 6px; align-items: center; line-height: 21px; }
.menu u { text-underline-offset: 2px; text-decoration-skip-ink: none; }
.menu svg { justify-self: start; }
.bar { display: grid; align-items: center; justify-items: center; flex: none; }
.bar1 { height: 40px; grid-template-columns: 14px 32px 14px 30px 12px 34px 28px 14px 26px 10px 30px 30px 32px 10px 26px 36px 7px 27px 37px 24px 17px 29px 10px 28px 13px 30px 13px 10px 30px 29px 13px 33px 7px 30px 32px 25px 15px; }
.bar2 { height: 42px; grid-template-columns: 14px 31px 10px 120px 8px 143px 7px 65px 8px 28px 34px 29px 9px 31px 31px 31px 31px 10px 26px 36px 26px 37px 4px 30px 13px 10px 15px; }
.grip { justify-self: start; margin-left: 3px; width: 5px; height: 40px; background: radial-gradient(circle at 1px 1px, #80a8b8 .8px, transparent 1px) 0 0 / 4px 4px; }
.arr { width: 5px; height: 4px; color: #181414; }
.pale { color: #80a8b8; }
.abc text { font: bold 11px "Liberation Sans", sans-serif; letter-spacing: 0; fill: #181414; }
.combo { justify-self: stretch; display: flex; height: 21px; gap: 2px; padding: 0 2px 0 3px; }
.combo em, .combo i { background: #fff; border-top: 1px solid #b8b0ac; border-radius: 3px; }
.combo em { flex: 1; padding-left: 1px; line-height: 19px; white-space: nowrap; }
.combo i { width: 24px; display: flex; align-items: center; justify-content: center; padding-left: 4px; }
.fmt { color: #f0f4f6; -webkit-text-stroke: 1px #487890; line-height: 26px; font-family: "DejaVu Serif", serif; }
.bold { font-size: 23px; font-weight: bold; }
.ital { font-size: 23px; font-style: italic; }
.undl { font-size: 19px; font-family: "DejaVu Sans", sans-serif; line-height: 18px; border-bottom: 2px solid #588098; }
.lines { width: 20px; height: 20px; }
.lines rect { fill: #fff; stroke: #487890; }
.lines .dots rect { fill: #80a8b8; stroke: #80a8b8; }
.lines .nums path { fill: none; stroke: #6f9cae; stroke-width: 1.5px; }

.work { display: flex; height: 391px; flex: none; overflow: hidden; }
.workmain { width: 822px; padding-top: 4px; display: flex; flex-direction: column; }
.hruler, .vruler { overflow: hidden; }
.rnum text { font-size: 10px; fill: #588098; }
.docrow { display: flex; flex: 1; }
.page { flex: 1; height: 350px; overflow: hidden; background: #fff; border: solid #b8b0ac; border-width: 1px 0 0 1px; box-shadow: -2px 0 3px #c0b8b4; padding-left: 77px; margin-top: -1px; font-family: "Liberation Serif", serif; font-size: 16px; line-height: 20px; letter-spacing: -.01px; }
.corners { display: flex; justify-content: space-between; padding: 64px 25px 0 0; margin-left: -13px; height: 78px; }
.corners i { width: 13px; height: 14px; border: solid #e0e0e0; border-width: 0 2px 2px 0; }
.corners i + i { border-width: 0 0 2px 2px; }
.page h2 { font-family: "Liberation Sans", Arial, sans-serif; font-weight: bold; white-space: nowrap; letter-spacing: .03px; }
.page .t1 { font-size: 24px; line-height: 28px; margin-top: 15px; }
.page .t2, .page .t3 { font-size: 21.300px; line-height: 24px; }
.page .t2 { margin: 22px 0 7px; }
.page .t3 { margin: 15px 0 7px; }
.page li { position: relative; padding-left: 48px; white-space: nowrap; }
.page li::before { content: ""; position: absolute; left: 25px; top: 7px; width: 4px; height: 4px; border-radius: 50%; background: #181414; }
.page li li { padding-left: 24px; }
.page li li::before { left: 4px; top: 6px; width: 6px; height: 6px; background: none; border: 1px solid #181414; }

.vscroll { width: 15px; display: flex; flex-direction: column; align-items: center; padding: 3px 2px 3px 0; }
.vscroll svg { color: #181414; }
.vscroll .up { transform: rotate(180deg); }
.vscroll .soft { color: #80a8b8; }
.vtrack { width: 12px; height: 355px; margin: 2px 0 4px; background: #a1b0b6; border: 1px solid #80a8b8; border-radius: 4px; }
.vscroll svg:last-child { margin-top: 6px; }
.vthumb { width: 12px; height: 117px; margin: -1px; background: linear-gradient(90deg, #f0efee, #d0ccc8); border: 2px solid #588098; border-radius: 4px; }
.hscroll { flex: none; height: 16px; display: grid; grid-template-columns: 12px 782px 16px 12px 1fr; align-items: center; justify-items: center; background: #c0b8b4; }
.hscroll i { height: 100%; justify-self: end; width: 14px; background: #d8d4d0; }
.htrack { width: 782px; height: 13px; margin-bottom: 2px; background: #a1b0b6; border: 1px solid #80a8b8; border-top-color: #487890; border-radius: 4px; }
.hthumb { width: 728px; height: 13px; margin: -1px; background: linear-gradient(#f0efee, #d0ccc8); border: 2px solid #588098; border-radius: 4px; }
.status { flex: 1; display: grid; background: #c0b8b4; border-top: 1px solid #80a8b8; letter-spacing: -.3px;
  grid-template-columns: 70px 173px 92px 97px 67px 29px 29px 29px 13px 76px 143px 19px; align-items: center; padding-bottom: 2px; }
.status span { height: 14px; line-height: 14px; border-right: 1px solid #80a8b8; box-shadow: 1px 0 #f0efee; padding-left: 7px; white-space: nowrap; display: flex; align-items: center; }
.status span:first-child { padding-left: 6px; letter-spacing: -.15px; }
.status span:last-child { border: 0; box-shadow: none; overflow: hidden; }
.status b { width: 23px; height: 17px; background: #d8d4d0; margin-left: -3px; flex: none; }
.status span + span b { margin-left: -4px; }
.status span:nth-child(9) b { width: 7px; }
.status span:nth-child(10) { padding-left: 12px; }
.status span:nth-child(11) { padding-left: 10px; }

.taskbar { position: absolute; left: 0; right: 0; bottom: 0; height: 27px; padding: 0 0 2px 3px; border-top: 1px solid #c0b8b4; background: #f0efee;
  display: grid; grid-template-columns: 29px 38px 19px 234px 19px 449px 27px 25px 32px 25px 30px 19px 55px 1fr; align-items: center; white-space: nowrap; letter-spacing: -.43px; }
.taskbar strong { letter-spacing: -.1px; }
.taskbar time { font-size: 11px; letter-spacing: 0; }
.taskbar .dotsic { margin-top: 6px; }
.taskbar .cashew { justify-self: end; }
```
